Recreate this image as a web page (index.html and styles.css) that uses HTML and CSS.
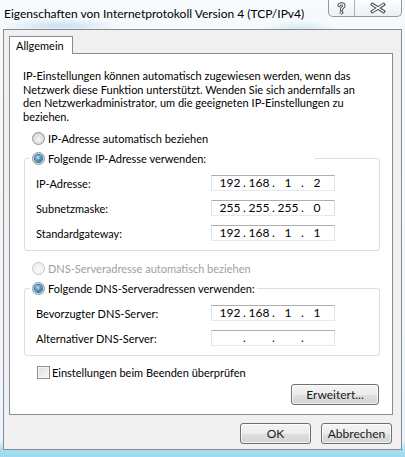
FILE: index.html
```html
<!DOCTYPE html>
<html lang="de">
<head>
	<meta charset="UTF-8">
	<title>Eigenschaften von Internetprotokoll Version 4 (TCP/IPv4)</title>
	<link rel="stylesheet" href="styles.css">
</head>
<body>
	<div class="window">
		<div class="titlebar">
			<span class="title">Eigenschaften von Internetprotokoll Version 4 (TCP/IPv4)</span>
			<div class="caption-btns">
				<span class="cap-btn help">
					<svg width="26" height="16" viewBox="0 0 26 16">
						<g fill="none" stroke-linecap="round" stroke-linejoin="round">
							<path d="M10.5 5.5 C10.5 3 15.5 3 15.5 5.5 C15.5 7.5 13 7.5 13 9.6" stroke="#4d4d4d" stroke-width="3.4"/>
							<path d="M10.5 5.5 C10.5 3 15.5 3 15.5 5.5 C15.5 7.5 13 7.5 13 9.6" stroke="#fff" stroke-width="1.3"/>
							<circle cx="13" cy="12.8" r="1.5" fill="#fff" stroke="#4d4d4d" stroke-width="1"/>
						</g>
					</svg>
				</span>
				<span class="cap-btn close">
					<svg width="46" height="16" viewBox="0 0 46 16">
						<g fill="none" stroke-linecap="square">
							<path d="M17.5 4.5 L28.5 11.5 M28.5 4.5 L17.5 11.5" stroke="#4d4d4d" stroke-width="3.4"/>
							<path d="M17.5 4.5 L28.5 11.5 M28.5 4.5 L17.5 11.5" stroke="#fff" stroke-width="1.3"/>
						</g>
					</svg>
				</span>
			</div>
		</div>

		<div class="client">
			<div class="tabs">
				<span class="tab active">Allgemein</span>
			</div>
			<div class="panel">
				<p class="intro">IP-Einstellungen können automatisch zugewiesen werden, wenn das<br>Netzwerk diese Funktion unterstützt. Wenden Sie sich andernfalls an<br>den Netzwerkadministrator, um die geeigneten IP-Einstellungen zu<br>beziehen.</p>

				<label class="opt"><span class="radio"></span>IP-Adresse automatisch beziehen</label>
				<fieldset class="group">
					<legend class="ip-legend"><label class="opt"><span class="radio checked"></span>Folgende IP-Adresse verwenden:</label></legend>
					<div class="row">
						<span>IP-Adresse:</span>
						<span class="ip"><span>192</span><i>.</i><span>168</span><i>.</i><span>1</span><i>.</i><span>2</span></span>
					</div>
					<div class="row">
						<span>Subnetzmaske:</span>
						<span class="ip"><span>255</span><i>.</i><span>255</span><i>.</i><span>255</span><i>.</i><span>0</span></span>
					</div>
					<div class="row">
						<span>Standardgateway:</span>
						<span class="ip"><span>192</span><i>.</i><span>168</span><i>.</i><span>1</span><i>.</i><span>1</span></span>
					</div>
				</fieldset>

				<label class="opt disabled dns-auto"><span class="radio"></span>DNS-Serveradresse automatisch beziehen</label>
				<fieldset class="group">
					<legend><label class="opt"><span class="radio checked"></span>Folgende DNS-Serveradressen verwenden:</label></legend>
					<div class="row">
						<span>Bevorzugter DNS-Server:</span>
						<span class="ip"><span>192</span><i>.</i><span>168</span><i>.</i><span>1</span><i>.</i><span>1</span></span>
					</div>
					<div class="row">
						<span>Alternativer DNS-Server:</span>
						<span class="ip"><span></span><i>.</i><span></span><i>.</i><span></span><i>.</i><span></span></span>
					</div>
				</fieldset>

				<label class="opt check"><span class="checkbox"></span>Einstellungen beim Beenden überprüfen</label>
				<div class="panel-actions">
					<button class="btn wide">Erweitert...</button>
				</div>
			</div>
			<div class="dialog-actions">
				<button class="btn">OK</button>
				<button class="btn">Abbrechen</button>
			</div>
		</div>
	</div>
</body>
</html>
```

FILE: styles.css
```css
* {
	box-sizing: border-box;
}
html, body {
	margin: 0;
	width: 405px;
	height: 457px;
	overflow: hidden;
}
body {
	font-family: Lato, "Open Sans", sans-serif;
	font-size: 11px;
	color: #000;
	background:
		radial-gradient(ellipse 60px 8px at 60px 26px, rgba(150, 190, 225, .45), transparent),
		radial-gradient(ellipse 40px 10px at 300px 30px, rgba(170, 215, 235, .5), transparent),
		linear-gradient(to bottom, #f7fafc 0, #eef5fa 440px, #a9def1 450px, #9fd9ef 457px);
}
.window {
	display: flex;
	flex-direction: column;
	height: 457px;
}

/* title bar */
.titlebar {
	height: 29px;
	display: flex;
	justify-content: space-between;
	align-items: flex-start;
}
.title {
	padding: 6px 0 0 4px;
	line-height: 16px;
	font-size: 12px;
	white-space: nowrap;
}
.caption-btns {
	display: flex;
	margin-right: 3px;
	height: 17px;
	border: 1px solid #8e99a4;
	border-top: none;
	border-radius: 0 0 5px 5px;
	background: linear-gradient(to bottom, #fcfdfe, #eaf0f5);
	overflow: hidden;
}
.cap-btn {
	display: flex;
	align-items: center;
	justify-content: center;
}
.cap-btn.help {
	width: 26px;
	border-right: 1px solid #a9b3bc;
}
.cap-btn.close {
	width: 46px;
}

/* dialog body */
.client {
	margin: 0 3px;
	height: 421px;
	border: 1px solid #858b91;
	background: #f0f0f0;
	padding: 6px 8px 0 5px;
}
.tabs {
	display: flex;
	height: 17px;
}
.tab {
	position: relative;
	z-index: 1;
	height: 18px;
	padding: 0 8px 0 6px;
	line-height: 17px;
	background: #fff;
	border: 1px solid #898c95;
	border-bottom: none;
}
.panel {
	height: 362px;
	background: #fff;
	border: 1px solid #898c95;
	padding: 0 12px 0 14px;
}
.intro {
	margin: 15px 0 0 -1px;
	line-height: 13.5px;
	white-space: nowrap;
}

/* radios and checkbox */
.opt {
	display: flex;
	align-items: center;
	height: 16px;
	white-space: nowrap;
}
.panel > .opt {
	margin: 7px 0 0 8px;
}
.panel > .dns-auto {
	margin-top: 9px;
}
.panel > .check {
	margin: 8px 0 0 13px;
}
.radio {
	width: 13px;
	height: 13px;
	margin-right: 3px;
	border-radius: 50%;
	border: 1px solid #8f9296;
	background: radial-gradient(circle at 50% 60%, #f4f4f4 0, #dedede 55%, #c9c9c9 100%);
	display: flex;
	align-items: center;
	justify-content: center;
}
.radio.checked::after {
	content: "";
	width: 7px;
	height: 7px;
	border-radius: 50%;
	background: radial-gradient(circle at 40% 35%, #b6e2f8 0, #4a9ccb 45%, #1b4f78 100%);
	box-shadow: 0 0 0 1px #3b6f93;
}
.opt.disabled {
	color: #a0a0a0;
}
.opt.disabled .radio {
	border-color: #c3c6c9;
	background: radial-gradient(circle at 50% 60%, #fafafa 0, #efefef 70%, #e4e4e4 100%);
}
.checkbox {
	width: 13px;
	height: 13px;
	margin-right: 2px;
	border: 1px solid #8f8f8f;
	background: linear-gradient(135deg, #dcdcdc 0, #f2f2f2 70%, #fafafa 100%);
	box-shadow: inset 0 0 0 1px #f4f4f4;
}

/* group boxes */
.group {
	margin: 4px 0 0;
	padding: 9px 0 9px 5px;
	border: 1px solid #d5dfe5;
	border-radius: 3px;
	min-width: 0;
}
.group legend {
	padding: 0 2px;
	height: 16px;
}
.group legend.ip-legend {
	width: 285px;
}
.row {
	display: grid;
	grid-template-columns: 175px 124px;
	align-items: center;
	height: 16px;
	padding-left: 6px;
}
.row + .row {
	margin-top: 9px;
}

/* ip address fields */
.ip {
	display: grid;
	grid-template-columns: 24px 5px 24px 5px 24px 5px 24px;
	align-items: center;
	height: 16px;
	padding-left: 6px;
	border: 1px solid;
	border-color: #abadb3 #dbdfe6 #e3e9ef #e2e3ea;
	background: #fff;
	line-height: 14px;
	font-size: 12px;
}
.ip span, .ip i {
	text-align: center;
	font-style: normal;
}

/* buttons */
.btn {
	height: 21px;
	width: 71px;
	padding: 0;
	font-family: inherit;
	font-size: 12px;
	font-weight: 400;
	color: #1a1a1a;
	border: 1px solid #707070;
	border-radius: 3px;
	background: linear-gradient(to bottom, #f4f4f4 0, #ececec 50%, #e0e0e0 50%, #d3d3d3 100%);
	box-shadow: inset 0 0 0 1px rgba(255, 255, 255, .7);
}
.btn.wide {
	width: 88px;
}
.panel-actions {
	display: flex;
	justify-content: flex-end;
	margin: 4px 1px 0 0;
}
.dialog-actions {
	display: flex;
	justify-content: flex-end;
	gap: 10px;
	margin-top: 8px;
	padding-right: 1px;
}
```
